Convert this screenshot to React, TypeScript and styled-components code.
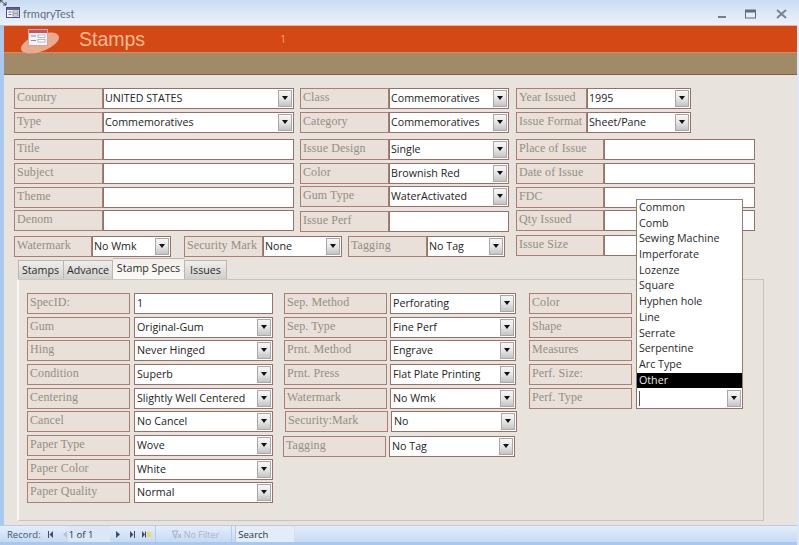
import React from "react";
import styled, { createGlobalStyle } from "styled-components";

const Global = createGlobalStyle`
  html, body { margin: 0; padding: 0; background: #fff; }
  #root { width: 799px; height: 545px; overflow: hidden; }
  * { box-sizing: border-box; }
`;

const Win = styled.div`
  position: relative;
  width: 799px;
  height: 545px;
  display: flex;
  flex-direction: column;
  background: linear-gradient(90deg, #a9c8ef 0, #a9c8ef 4px, #dbe8f8 4px);
  font-family: "Open Sans", "Liberation Sans", sans-serif;
`;

const TitleBar = styled.div`
  height: 25px;
  flex: none;
  display: flex;
  align-items: center;
  padding: 0 12px 0 6px;
  background: linear-gradient(180deg, #c9dcf4 0, #dce8f7 50%, #eaf1fa 100%);
`;

const TitleText = styled.span`
  margin-left: 3px;
  font-family: "Lato", "Open Sans", sans-serif;
  font-size: 11px;
  color: #5f6f86;
  position: relative;
  top: 1px;
`;

const WinButtons = styled.div`
  margin-left: auto;
  display: flex;
  align-items: center;
  position: relative;
  top: 1px;
`;

const WinBtn = styled.svg<{ $ml?: number }>`
  margin-left: ${(p) => p.$ml ?? 0}px;
`;

const Corner = styled.svg`
  position: absolute;
  left: 0;
  top: 0;
`;

const Frame = styled.div`
  flex: 1;
  min-height: 0;
  margin: 0 2px 0 4px;
  display: flex;
  flex-direction: column;
`;

const Header = styled.div`
  position: relative;
  height: 28px;
  flex: none;
  display: flex;
  align-items: center;
  background: #d34815;
  border-top: 1px solid #eeb592;
  border-bottom: 1px solid #e08a5c;
`;

const Logo = styled.svg`
  position: absolute;
  left: 15px;
  top: 2px;
`;

const HeaderTitle = styled.span`
  margin-left: 75px;
  font-family: "Liberation Sans", Arial, sans-serif;
  font-size: 19.5px;
  color: #fbb98c;
`;

const HeaderNum = styled.span`
  margin-left: 135px;
  margin-top: -1px;
  font-family: "Open Sans", sans-serif;
  font-size: 11px;
  color: #f2a16c;
`;

const Band = styled.div`
  height: 22px;
  flex: none;
  background: #a08a68;
  border-bottom: 1px solid #7d5f4a;
  box-shadow: 0 1px 0 #f3cfb6;
`;

const Body = styled.div`
  flex: 1;
  min-height: 0;
  background: #e8e3dc;
  padding: 13px 0 0 10px;
`;

const TopArea = styled.div`
  display: flex;
  align-items: flex-start;
  height: 167px;
`;

const TopLeft = styled.div`
  display: flex;
  flex-direction: column;
`;

const TopCols = styled.div`
  display: flex;
  gap: 6px;
`;

const Col = styled.div<{ $ml?: number }>`
  display: flex;
  flex-direction: column;
  margin-left: ${(p) => p.$ml ?? 0}px;
`;

const BottomRow = styled.div`
  display: flex;
  margin-top: 4px;
`;

const Field = styled.div<{ $gap?: number; $mt?: number; $ml?: number }>`
  display: flex;
  height: 21px;
  flex: none;
  gap: ${(p) => p.$gap ?? 0}px;
  margin-top: ${(p) => p.$mt ?? 0}px;
  margin-left: ${(p) => p.$ml ?? 0}px;
`;

const Label = styled.div<{ $w: number }>`
  width: ${(p) => p.$w}px;
  flex: none;
  display: flex;
  align-items: center;
  padding: 0 0 3px 2px;
  background: #e9e0d9;
  border: 1px solid #a97f75;
  font-family: "Liberation Serif", "Times New Roman", serif;
  font-size: 12px;
  letter-spacing: 0.08px;
  white-space: nowrap;
  color: #958e83;
`;

const Value = styled.div<{ $w: number; $pl?: number }>`
  position: relative;
  width: ${(p) => p.$w}px;
  flex: none;
  display: flex;
  align-items: center;
  padding: 0 1px 1px ${(p) => p.$pl ?? 1}px;
  background: #fff;
  border: 1px solid #96706a;
  font-size: 10.7px;
  white-space: nowrap;
  color: #232323;
`;

const Caret = styled.span`
  width: 1px;
  height: 15px;
  margin-left: 1px;
  background: #555;
`;

const Arrow = styled.span`
  margin-left: auto;
  width: 14px;
  height: 17px;
  flex: none;
  display: flex;
  align-items: center;
  justify-content: center;
  background: linear-gradient(180deg, #f6f6f6 0, #e6e6e6 50%, #c4c4c4 100%);
  border: 1px solid #a8a8a8;
  &::after {
    content: "";
    border-left: 3.5px solid transparent;
    border-right: 3.5px solid transparent;
    border-top: 4px solid #111;
  }
`;

const Tabs = styled.div`
  display: flex;
  align-items: flex-end;
  height: 21px;
  padding-left: 4px;
  margin-top: 3px;
`;

const Tab = styled.div<{ $active?: boolean; $w: number }>`
  width: ${(p) => p.$w}px;
  height: ${(p) => (p.$active ? 21 : 19)}px;
  display: flex;
  align-items: center;
  justify-content: center;
  font-size: 10.7px;
  color: #2b2b2b;
  padding-bottom: ${(p) => (p.$active ? 2 : 0)}px;
  background: ${(p) =>
    p.$active ? "linear-gradient(180deg,#f2efea,#fbfaf8)" : "linear-gradient(180deg,#efeeeb,#cfcfcd)"};
  border: 1px solid #b9b7b2;
  border-left-width: ${(p) => (p.$active ? 0 : 1)}px;
  border-right-width: ${(p) => (p.$active ? 0 : 1)}px;
  border-bottom: 0;
  margin-left: -0.5px;
`;

const Panel = styled.div`
  width: 747px;
  height: 242px;
  margin-left: 3px;
  display: flex;
  padding: 13px 0 0 8px;
  background: #e8e3dc;
  border: 1px solid #c9c5bd;
  border-left-color: #f8f6f2;
  border-left-width: 2px;
`;

const Popup = styled.div`
  position: absolute;
  z-index: 5;
  left: -1px;
  bottom: 19px;
  width: 107px;
  height: 190px;
  background: #fff;
  border: 1px solid #8b7f78;
  border-bottom: 0;
`;

const PopupItem = styled.div<{ $selected?: boolean }>`
  height: 15.7px;
  line-height: 15.7px;
  padding-left: 2px;
  font-size: 10.7px;
  background: ${(p) => (p.$selected ? "#000" : "transparent")};
  color: ${(p) => (p.$selected ? "#e8e8e8" : "#2a2a2a")};
`;

const Status = styled.div`
  height: 17px;
  flex: none;
  display: flex;
  align-items: center;
  margin-left: -4px;
  padding-left: 7px;
  background: linear-gradient(180deg, #e4eefa, #c6daf3);
  border-top: 1px solid #b7cbe4;
  font-size: 9.5px;
  color: #44586f;
`;

const Foot = styled.div`
  height: 3px;
  flex: none;
  margin-left: -4px;
  background: #a9c8ef;
`;

const NavBtn = styled.svg<{ $ml: number }>`
  margin-left: ${(p) => p.$ml}px;
  flex: none;
`;

const RecordBox = styled.div`
  width: 42px;
  height: 100%;
  margin-left: 1px;
  padding-left: 1px;
  display: flex;
  align-items: center;
  color: #2b3442;
  background: #dbe7f6;
`;

const StatusSep = styled.div<{ $ml: number }>`
  width: 1px;
  height: 100%;
  margin-left: ${(p) => p.$ml}px;
  background: #b7cbe4;
`;

const FilterText = styled.span`
  margin-left: 2px;
  font-size: 9px;
  color: #a9b6c6;
`;

const SearchBox = styled.div`
  width: 60px;
  height: 100%;
  margin-left: 3px;
  padding-left: 2px;
  display: flex;
  align-items: center;
  color: #2b3442;
  background: #e3edf9;
  border-left: 1px solid #b7cbe4;
  border-right: 1px solid #d3e0f1;
`;

type F = { l: string; v?: string; combo?: boolean; mt?: number; ml?: number };

const TopField = ({ f, lw, vw }: { f: F; lw: number; vw: number }) => (
  <Field $mt={f.mt} $ml={f.ml}>
    <Label $w={lw}>{f.l}</Label>
    <Value $w={vw}>
      {f.v}
      {f.combo && <Arrow />}
    </Value>
  </Field>
);

const col1: F[] = [
  { l: "Country", v: "UNITED STATES", combo: true },
  { l: "Type", v: "Commemoratives", combo: true, mt: 3 },
  { l: "Title", mt: 6 },
  { l: "Subject", mt: 3 },
  { l: "Theme", mt: 3 },
  { l: "Denom", mt: 2 },
];
const col2: F[] = [
  { l: "Class", v: "Commemoratives", combo: true },
  { l: "Category", v: "Commemoratives", combo: true, mt: 3 },
  { l: "Issue Design", v: "Single", combo: true, mt: 6 },
  { l: "Color", v: "Brownish Red", combo: true, mt: 3 },
  { l: "Gum Type", v: "WaterActivated", combo: true, mt: 2 },
  { l: "Issue Perf", mt: 4 },
];
const col3a: F[] = [
  { l: "Year Issued", v: "1995", combo: true },
  { l: "Issue Format", v: "Sheet/Pane", combo: true, mt: 3 },
];
const col3b: F[] = [
  { l: "Place of Issue", mt: 6 },
  { l: "Date of Issue", mt: 3 },
  { l: "FDC", mt: 3 },
  { l: "Qty Issued", mt: 2 },
];

const spec1: F[] = [
  { l: "SpecID:", v: "1" },
  { l: "Gum", v: "Original-Gum", combo: true, mt: 3 },
  { l: "Hing", v: "Never Hinged", combo: true, mt: 2 },
  { l: "Condition", v: "Superb", combo: true, mt: 3 },
  { l: "Centering", v: "Slightly Well Centered", combo: true, mt: 3 },
  { l: "Cancel", v: "No Cancel", combo: true, mt: 2 },
  { l: "Paper Type", v: "Wove", combo: true, mt: 3 },
  { l: "Paper Color", v: "White", combo: true, mt: 3 },
  { l: "Paper Quality", v: "Normal", combo: true, mt: 2 },
];
const spec2: F[] = [
  { l: "Sep. Method", v: "Perforating", combo: true },
  { l: "Sep. Type", v: "Fine Perf", combo: true, mt: 3 },
  { l: "Prnt. Method", v: "Engrave", combo: true, mt: 2 },
  { l: "Prnt. Press", v: "Flat Plate Printing", combo: true, mt: 3 },
  { l: "Watermark", v: "No Wmk", combo: true, mt: 3 },
  { l: "Security:Mark", v: "No", combo: true, mt: 2, ml: 1 },
  { l: "Tagging", v: "No Tag", combo: true, mt: 4, ml: -1 },
];
const spec3 = [
  { l: "Color", mt: 0 },
  { l: "Shape", mt: 3 },
  { l: "Measures", mt: 2 },
  { l: "Perf. Size:", mt: 3 },
];
const perfTypes = [
  "Common", "Comb", "Sewing Machine", "Imperforate", "Lozenze", "Square",
  "Hyphen hole", "Line", "Serrate", "Serpentine", "Arc Type", "Other",
];

const FormIcon = () => (
  <svg width="14" height="11" viewBox="0 0 14 11">
    <rect x="0.5" y="0.5" width="13" height="10" fill="#f4f6fa" stroke="#4a4f86" />
    <rect x="1" y="1" width="12" height="2" fill="#5f5f96" />
    <rect x="2.5" y="4.5" width="3" height="1" fill="#777" />
    <rect x="2.5" y="7" width="3" height="1" fill="#777" />
    <rect x="7" y="4" width="5" height="2" fill="#fff" stroke="#555" strokeWidth="0.6" />
    <rect x="7" y="7" width="5" height="2" fill="#fff" stroke="#555" strokeWidth="0.6" />
  </svg>
);

const navFill = "#3d4f66";

export default function App() {
  return (
    <Win>
      <Global />
      <Corner width="7" height="6" viewBox="0 0 7 6">
        <path d="M0 0 L6 5 M0 3 V0 H3 M6 2 V5 H3" stroke="#333" strokeWidth="0.9" fill="none" />
      </Corner>
      <TitleBar>
        <FormIcon />
        <TitleText>frmqryTest</TitleText>
        <WinButtons>
          <WinBtn width="11" height="10" viewBox="0 0 11 10">
            <rect x="1" y="7" width="8" height="2" fill="#71808f" />
          </WinBtn>
          <WinBtn $ml={17} width="11" height="10" viewBox="0 0 11 10">
            <rect x="0.5" y="1" width="10" height="8" fill="#e4edf8" stroke="#5f6d80" />
            <rect x="1" y="1" width="9" height="2.5" fill="#5f6d80" />
          </WinBtn>
          <WinBtn $ml={20} width="11" height="10" viewBox="0 0 11 10">
            <path d="M1 1 L10 9 M10 1 L1 9" stroke="#75838f" strokeWidth="1.8" />
          </WinBtn>
        </WinButtons>
      </TitleBar>
      <Frame>
        <Header>
          <Logo width="44" height="26" viewBox="0 0 44 26">
            <ellipse cx="21" cy="15" rx="20" ry="8.5" transform="rotate(-20 21 15)" fill="#eba98d" />
            <rect x="9.5" y="1.5" width="19" height="16" fill="#f5f2f4" stroke="#c9a8ac" />
            <rect x="10" y="2" width="18" height="3" fill="#c2536a" />
            <rect x="12" y="7.5" width="5" height="1" fill="#8a8fa0" />
            <rect x="12" y="12" width="5" height="1" fill="#8a8fa0" />
            <rect x="19" y="7" width="7" height="2.5" fill="#fff" stroke="#8a8fa0" strokeWidth="0.6" />
            <rect x="19" y="11.5" width="7" height="2.5" fill="#fff" stroke="#8a8fa0" strokeWidth="0.6" />
          </Logo>
          <HeaderTitle>Stamps</HeaderTitle>
          <HeaderNum>1</HeaderNum>
        </Header>
        <Band />
        <Body>
          <TopArea>
            <TopLeft>
              <TopCols>
                <Col>
                  {col1.map((f) => (
                    <TopField key={f.l} f={f} lw={89} vw={191} />
                  ))}
                </Col>
                <Col>
                  {col2.map((f) => (
                    <TopField key={f.l} f={f} lw={89} vw={120} />
                  ))}
                </Col>
              </TopCols>
              <BottomRow>
                <TopField f={{ l: "Watermark", v: "No Wmk", combo: true }} lw={78} vw={79} />
                <TopField f={{ l: "Security Mark", v: "None", combo: true, ml: 13 }} lw={79} vw={79} />
                <TopField f={{ l: "Tagging", v: "No Tag", combo: true, ml: 6 }} lw={79} vw={78} />
              </BottomRow>
            </TopLeft>
            <Col $ml={7}>
              {col3a.map((f) => (
                <TopField key={f.l} f={f} lw={71} vw={104} />
              ))}
              {col3b.map((f) => (
                <TopField key={f.l} f={f} lw={88} vw={151} />
              ))}
              <TopField f={{ l: "Issue Size", mt: 4 }} lw={88} vw={100} />
            </Col>
          </TopArea>
          <Tabs>
            <Tab $w={46}>Stamps</Tab>
            <Tab $w={50}>Advance</Tab>
            <Tab $w={72} $active>Stamp Specs</Tab>
            <Tab $w={43}>Issues</Tab>
          </Tabs>
          <Panel>
            <Col>
              {spec1.map((f) => (
                <Field key={f.l} $gap={4} $mt={f.mt}>
                  <Label $w={103}>{f.l}</Label>
                  <Value $w={139} $pl={2}>
                    {f.v}
                    {f.combo && <Arrow />}
                  </Value>
                </Field>
              ))}
            </Col>
            <Col $ml={11}>
              {spec2.map((f) => (
                <Field key={f.l} $gap={3} $mt={f.mt} $ml={f.ml}>
                  <Label $w={103}>{f.l}</Label>
                  <Value $w={126} $pl={2}>
                    {f.v}
                    {f.combo && <Arrow />}
                  </Value>
                </Field>
              ))}
            </Col>
            <Col $ml={12}>
              {spec3.map((f) => (
                <Field key={f.l} $mt={f.mt}>
                  <Label $w={103}>{f.l}</Label>
                </Field>
              ))}
              <Field $gap={4} $mt={3}>
                <Label $w={103}>Perf. Type</Label>
                <Value $w={107}>
                  <Popup>
                    {perfTypes.map((t) => (
                      <PopupItem key={t} $selected={t === "Other"}>{t}</PopupItem>
                    ))}
                  </Popup>
                  <Caret />
                  <Arrow />
                </Value>
              </Field>
            </Col>
          </Panel>
        </Body>
        <Status>
          Record:
          <NavBtn $ml={7} width="5" height="7" viewBox="0 0 5 7"><path d="M0 0h1v7H0zM5 0v7L1.5 3.5z" fill={navFill} /></NavBtn>
          <NavBtn $ml={10} width="4" height="7" viewBox="0 0 4 7"><path d="M4 0v7L0 3.5z" fill="#b4c3d6" /></NavBtn>
          <RecordBox>1 of 1</RecordBox>
          <NavBtn $ml={6} width="4" height="7" viewBox="0 0 4 7"><path d="M0 0v7l4-3.5z" fill={navFill} /></NavBtn>
          <NavBtn $ml={10} width="5" height="7" viewBox="0 0 5 7"><path d="M0 0v7l3.5-3.5zM4 0h1v7H4z" fill={navFill} /></NavBtn>
          <NavBtn $ml={7} width="9" height="7" viewBox="0 0 9 7"><path d="M0 0v7l3-3.5z" fill={navFill} /><rect x="3" y="0.5" width="1" height="6" fill={navFill} /><rect x="5" y="1" width="4" height="5" fill="#f2d66a" /></NavBtn>
          <StatusSep $ml={4} />
          <NavBtn $ml={15} width="11" height="9" viewBox="0 0 11 9"><path d="M1 1h6L5 4v4L3 7V4zM7 4l3 4M10 4L7 8" stroke="#9fadbf" strokeWidth="1" fill="none" /></NavBtn>
          <FilterText>No Filter</FilterText>
          <StatusSep $ml={12} />
          <SearchBox>Search</SearchBox>
        </Status>
        <Foot />
      </Frame>
    </Win>
  );
}
